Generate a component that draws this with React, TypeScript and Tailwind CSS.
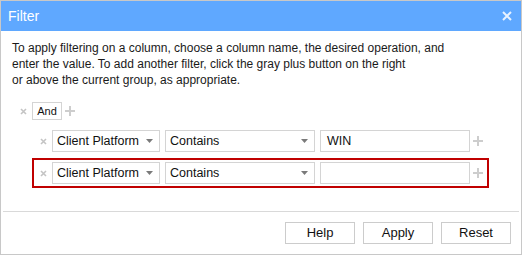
import React from 'react';

const font = { fontFamily: '"Liberation Sans", Arial, sans-serif' };

const RemoveMark = () => (
  <svg width="7" height="7" viewBox="0 0 7 7" className="block">
    <path d="M1 1L6 6M6 1L1 6" stroke="#c4c4c4" strokeWidth="1.6" />
  </svg>
);

const AddMark = () => (
  <svg width="10" height="10" viewBox="0 0 10 10" className="block">
    <path d="M5 0V10M0 5H10" stroke="#cdcdcd" strokeWidth="2" />
  </svg>
);

const Select = ({ value, width }: { value: string; width: string }) => (
  <div className={`${width} h-[22px] border border-[#d4d4d4] bg-white flex items-center justify-between pl-[4px] pr-[6px]`}>
    <span className="text-[12.5px] text-[#111]">{value}</span>
    <svg width="7" height="4" viewBox="0 0 7 4" className="block">
      <path d="M0 0H7L3.5 4Z" fill="#7a7a7a" />
    </svg>
  </div>
);

const ConditionRow = ({ value, active }: { value: string; active?: boolean }) => (
  <div
    className={`ml-[20px] w-[457px] flex items-center border-2 py-[2px] pr-[1px] ${
      active ? 'border-[#c00000]' : 'border-transparent'
    }`}
  >
    <div className="w-[18px] flex justify-center">
      <RemoveMark />
    </div>
    <Select value="Client Platform" width="w-[108px]" />
    <div className="w-[5px]" />
    <Select value="Contains" width="w-[150px]" />
    <div className="w-[5px]" />
    <div className="w-[150px] h-[22px] border border-[#d4d4d4] flex items-center px-[6px] text-[12.5px] text-[#111]">
      {value}
    </div>
    <div className="w-[16px] flex justify-center">
      <AddMark />
    </div>
  </div>
);

export default function App() {
  return (
    <div style={font} className="w-[522px] h-[255px] border border-[#c8c8c8] bg-white flex flex-col">
      {/* Title bar */}
      <div className="h-[30px] bg-[#5fa8ff] flex items-center justify-between pl-[7px] pr-[9px] text-white">
        <span className="text-[14px]">Filter</span>
        <svg width="10" height="10" viewBox="0 0 10 10" className="block">
          <path d="M1 1L9 9M9 1L1 9" stroke="#e8f2ff" strokeWidth="2" />
        </svg>
      </div>

      {/* Body */}
      <div className="flex-1 pt-[9px] pl-[11px]">
        <p className="text-[12px] leading-[16px] text-[#1a1a1a]">
          To apply filtering on a column, choose a column name, the desired operation, and
          <br />
          enter the value. To add another filter, click the gray plus button on the right
          <br />
          or above the current group, as appropriate.
        </p>

        <div className="mt-[14px] ml-[2px] flex items-center h-[18px]">
          <div className="w-[18px] flex justify-center">
            <RemoveMark />
          </div>
          <div className="w-[30px] h-[18px] border border-[#d4d4d4] flex items-center justify-center text-[11px] text-[#111]">
            And
          </div>
          <div className="w-[16px] flex justify-center">
            <AddMark />
          </div>
        </div>

        <div className="mt-[6px]">
          <ConditionRow value="WIN" />
        </div>
        <div className="mt-[2px]">
          <ConditionRow value="" active />
        </div>
      </div>

      <div className="mx-[2px] h-px bg-[#d9d9d9]" />

      {/* Footer */}
      <div className="h-[42px] flex items-center justify-end gap-[8px] pr-[10px]">
        {['Help', 'Apply', 'Reset'].map((label) => (
          <button
            key={label}
            className="w-[70px] h-[22px] border border-[#cccccc] bg-white text-[13px] text-[#111]"
          >
            {label}
          </button>
        ))}
      </div>
    </div>
  );
}
